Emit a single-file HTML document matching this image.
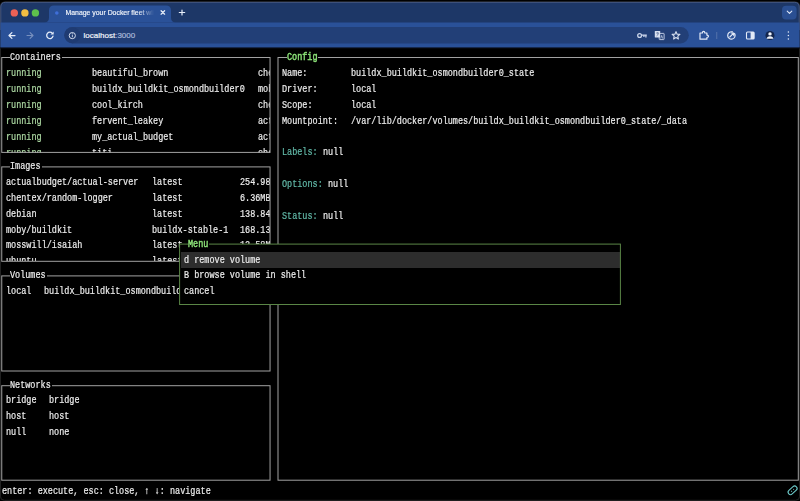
<!DOCTYPE html>
<html><head><meta charset="utf-8">
<style>
html,body{margin:0;padding:0;width:800px;height:501px;overflow:hidden;background:#000;}
body{position:relative;font-family:"Liberation Sans",sans-serif;}
.abs{position:absolute;}
.t{position:absolute;white-space:pre;font-family:"Liberation Mono",monospace;font-size:10.00px;line-height:10px;color:#ededed;-webkit-text-stroke:0.2px currentColor;transform:scaleX(0.8483);transform-origin:0 0;}
.g{color:#aedba4;}
.tg{color:#8ce278;-webkit-text-stroke:0.45px currentColor;}
.cy{color:#62baa9;}
.clip{position:absolute;overflow:hidden;}
</style></head><body>
<svg class="abs" style="left:0;top:0" width="800" height="501">
  <rect x="0.4" y="1.9" width="799.2" height="498.4" rx="4" fill="#000" stroke="#2a2a2a" stroke-width="0.9"/>
  <path d="M0.4 7 Q0.4 1.9 5.5 1.9 H794.5 Q799.6 1.9 799.6 7 V48 H0.4Z" fill="#1d3767"/>
  <path d="M0.8 30 V7 Q0.8 2.3 5.5 2.3 H794.5 Q799.2 2.3 799.2 7 V30" fill="none" stroke="#4b5b82" stroke-width="0.9"/>
  <rect x="0.5" y="22.5" width="799" height="25" fill="#2a5198"/>
  <path d="M44 22.5 Q49 22.5 49 17.5 V10.5 Q49 5.5 54 5.5 H166 Q171 5.5 171 10.5 V17.5 Q171 22.5 176 22.5Z" fill="#2a5198"/>
  <circle cx="14.3" cy="12.9" r="3.7" fill="#ec6156"/>
  <circle cx="24.9" cy="12.9" r="3.7" fill="#f3be42"/>
  <circle cx="35.4" cy="12.9" r="3.7" fill="#5fc04c"/>
  <rect x="782" y="5.7" width="14.6" height="13.8" rx="4" fill="#2a4f92"/>
  <path d="M787.2 11.2 L789.5 13.4 L791.8 11.2" fill="none" stroke="#dfe8f8" stroke-width="1.1" stroke-linecap="round" stroke-linejoin="round"/>
  <rect x="64.2" y="27" width="624.6" height="16.4" rx="8.2" fill="#223f77"/>
  <circle cx="72.4" cy="35.2" r="8" fill="#1f3b72"/>
  <circle cx="72.3" cy="35.6" r="3.1" fill="none" stroke="#e3eaf7" stroke-width="0.9"/>
  <rect x="71.9" y="34.6" width="0.8" height="2.6" fill="#e3eaf7"/>
  <circle cx="72.3" cy="33.5" r="0.45" fill="#e3eaf7"/>
  <!-- back -->
  <path d="M15 35.5 H9.2 M11.9 32.6 L9 35.5 L11.9 38.4" fill="none" stroke="#e6edf9" stroke-width="1.25" stroke-linecap="round" stroke-linejoin="round"/>
  <!-- forward -->
  <path d="M27 35.5 H32.8 M30.1 32.6 L33 35.5 L30.1 38.4" fill="none" stroke="#7890bf" stroke-width="1.1" stroke-linecap="round" stroke-linejoin="round"/>
  <!-- reload -->
  <path d="M52.4 33.4 A3.2 3.2 0 1 0 53 36.2" fill="none" stroke="#e6edf9" stroke-width="1.3" stroke-linecap="round"/>
  <path d="M53.7 31.4 V34.6 H50.5Z" fill="#e6edf9"/>
  <!-- key -->
  <circle cx="639.6" cy="35.5" r="1.9" fill="none" stroke="#c9d4ea" stroke-width="1.3"/>
  <path d="M641.5 35.2 H646.8 M645.9 35.2 V37.4 M643.9 35.2 V37" fill="none" stroke="#c9d4ea" stroke-width="1.3"/>
  <!-- translate -->
  <rect x="659.2" y="33.4" width="4.9" height="6.2" rx="0.5" fill="none" stroke="#c9d4ea" stroke-width="0.9"/>
  <rect x="654.8" y="31" width="5.4" height="6.6" rx="0.5" fill="#d8e0f0"/>
  <path d="M656.2 33 H658.8 M657.5 32.4 V33.4 M656.6 35.9 Q658 35 658.6 33.4" fill="none" stroke="#4a5f8a" stroke-width="0.7"/>
  <path d="M660.7 38.6 L661.7 35.4 L662.7 38.6" fill="none" stroke="#c9d4ea" stroke-width="0.7"/>
  <!-- star -->
  <path d="M676 31.6 L677.1 34.2 L679.9 34.4 L677.8 36.2 L678.4 39 L676 37.5 L673.6 39 L674.2 36.2 L672.1 34.4 L674.9 34.2Z" fill="none" stroke="#d7e0f0" stroke-width="1.1" stroke-linejoin="round"/>
  <!-- extension -->
  <path d="M700 33 H702.4 Q702.4 31.4 703.6 31.4 Q704.8 31.4 704.8 33 H706.9 V35.1 Q708.5 35.1 708.5 36.3 Q708.5 37.5 706.9 37.5 V39.2 H700Z" fill="none" stroke="#e3eaf7" stroke-width="1.2" stroke-linejoin="round"/>
  <rect x="716.4" y="32" width="0.8" height="7" fill="#5f7bb0"/>
  <!-- labs -->
  <path d="M734.6 33.6 A3.7 3.7 0 1 1 732.4 31.9" fill="none" stroke="#e3eaf7" stroke-width="1.2" stroke-linecap="round"/>
  <path d="M729.8 37 L733.6 33.2 M731.2 33 H733.8 V35.6" fill="none" stroke="#e3eaf7" stroke-width="1.1" stroke-linecap="round" stroke-linejoin="round"/>
  <!-- sidebar -->
  <rect x="746.5" y="32" width="7.6" height="7" rx="1" fill="none" stroke="#e3eaf7" stroke-width="1.1"/>
  <rect x="750.6" y="32" width="3.5" height="7" fill="#e3eaf7"/>
  <!-- profile -->
  <circle cx="770" cy="35.5" r="4.5" fill="#14264d"/>
  <circle cx="770" cy="33.9" r="1.7" fill="#f2f5fb"/>
  <path d="M766.6 38.8 Q766.9 36.2 770 36.2 Q773.1 36.2 773.4 38.8Z" fill="#f2f5fb"/>
  <!-- menu dots -->
  <circle cx="788.4" cy="32.1" r="0.75" fill="#e3eaf7"/>
  <circle cx="788.4" cy="35.5" r="0.75" fill="#e3eaf7"/>
  <circle cx="788.4" cy="38.9" r="0.75" fill="#e3eaf7"/>
  <!-- tab contents -->
  <circle cx="56.8" cy="13" r="1.8" fill="#3f6fd8"/>
  <path d="M161.1 10.7 L164.6 14.2 M164.6 10.7 L161.1 14.2" stroke="#e8eef9" stroke-width="1.25" stroke-linecap="round"/>
  <path d="M182 10 V15 M179.3 12.5 H184.7" stroke="#e8eef9" stroke-width="1.2" stroke-linecap="round"/>
  <rect x="0" y="47.5" width="800" height="1" fill="#0a0f18"/>
</svg>
<div class="abs" style="left:65.5px;top:7.6px;width:88px;height:10px;overflow:hidden;white-space:pre;font-family:'Liberation Sans',sans-serif;font-size:6.9px;line-height:10px;color:#f3f6fb;-webkit-text-stroke:0.15px #f3f6fb;-webkit-mask-image:linear-gradient(90deg,#000 82%,transparent 100%)">Manage your Docker fleet with</div>
<div class="abs" style="left:83.6px;top:30.8px;white-space:pre;font-family:'Liberation Sans',sans-serif;font-size:8px;line-height:10px;color:#f3f6fb;-webkit-text-stroke:0.2px currentColor">localhost<span style="color:#a9b9d9">:3000</span></div>
<div class="clip" style="left:2px;top:58px;width:267.5px;height:94.5px"><div class="t g" style="left:4.25px;top:11px">running</div>
<div class="t" style="left:90.25px;top:11px">beautiful_brown</div>
<div class="t" style="left:256.25px;top:11px">chentex/random-logger</div>
<div class="t g" style="left:4.25px;top:27px">running</div>
<div class="t" style="left:90.25px;top:27px">buildx_buildkit_osmondbuilder0</div>
<div class="t" style="left:256.25px;top:27px">moby/buildkit:buildx-stable-1</div>
<div class="t g" style="left:4.25px;top:43px">running</div>
<div class="t" style="left:90.25px;top:43px">cool_kirch</div>
<div class="t" style="left:256.25px;top:43px">chentex/random-logger</div>
<div class="t g" style="left:4.25px;top:59px">running</div>
<div class="t" style="left:90.25px;top:59px">fervent_leakey</div>
<div class="t" style="left:256.25px;top:59px">actualbudget/actual-server</div>
<div class="t g" style="left:4.25px;top:75px">running</div>
<div class="t" style="left:90.25px;top:75px">my_actual_budget</div>
<div class="t" style="left:256.25px;top:75px">actualbudget/actual-server</div>
<div class="t g" style="left:4.25px;top:91px">running</div>
<div class="t" style="left:90.25px;top:91px">titi</div>
<div class="t" style="left:256.25px;top:91px">chentex/random-logger</div>
</div><div class="clip" style="left:2px;top:167px;width:267.5px;height:94px"><div class="t" style="left:4.25px;top:11px">actualbudget/actual-server</div>
<div class="t" style="left:149.75px;top:11px">latest</div>
<div class="t" style="left:238.25px;top:11px">254.98MB</div>
<div class="t" style="left:4.25px;top:27px">chentex/random-logger</div>
<div class="t" style="left:149.75px;top:27px">latest</div>
<div class="t" style="left:238.25px;top:27px">6.36MB</div>
<div class="t" style="left:4.25px;top:43px">debian</div>
<div class="t" style="left:149.75px;top:43px">latest</div>
<div class="t" style="left:238.25px;top:43px">138.84MB</div>
<div class="t" style="left:4.25px;top:59px">moby/buildkit</div>
<div class="t" style="left:149.75px;top:59px">buildx-stable-1</div>
<div class="t" style="left:238.25px;top:59px">168.13MB</div>
<div class="t" style="left:4.25px;top:74px">mosswill/isaiah</div>
<div class="t" style="left:149.75px;top:74px">latest</div>
<div class="t" style="left:238.25px;top:74px">12.58MB</div>
<div class="t" style="left:4.25px;top:90px">ubuntu</div>
<div class="t" style="left:149.75px;top:90px">latest</div>
<div class="t" style="left:238.25px;top:90px">77.86MB</div>
</div><div class="clip" style="left:2px;top:276px;width:267.5px;height:94.5px"><div class="t" style="left:4.25px;top:11px">local</div>
<div class="t" style="left:42.25px;top:11px">buildx_buildkit_osmondbuilder0_state</div>
</div><div class="clip" style="left:2px;top:386px;width:267.5px;height:94px"><div class="t" style="left:4.25px;top:10px">bridge</div>
<div class="t" style="left:47.25px;top:10px">bridge</div>
<div class="t" style="left:4.25px;top:26px">host</div>
<div class="t" style="left:47.25px;top:26px">host</div>
<div class="t" style="left:4.25px;top:42px">null</div>
<div class="t" style="left:47.25px;top:42px">none</div>
</div><div class="t" style="left:282.25px;top:69px">Name:</div>
<div class="t" style="left:351.25px;top:69px">buildx_buildkit_osmondbuilder0_state</div>
<div class="t" style="left:282.25px;top:85px">Driver:</div>
<div class="t" style="left:351.25px;top:85px">local</div>
<div class="t" style="left:282.25px;top:101px">Scope:</div>
<div class="t" style="left:351.25px;top:101px">local</div>
<div class="t" style="left:282.25px;top:117px">Mountpoint:</div>
<div class="t" style="left:351.25px;top:117px">/var/lib/docker/volumes/buildx_buildkit_osmondbuilder0_state/_data</div>
<div class="t cy" style="left:282.25px;top:148px">Labels:</div>
<div class="t" style="left:322.97px;top:148px">null</div>
<div class="t cy" style="left:282.25px;top:180px">Options:</div>
<div class="t" style="left:328.06px;top:180px">null</div>
<div class="t cy" style="left:282.25px;top:212px">Status:</div>
<div class="t" style="left:322.97px;top:212px">null</div>
<div class="t" style="left:1.75px;top:487px">enter: execute, esc: close, ↑ ↓: navigate</div>
<svg class="abs" style="left:0;top:0" width="800" height="501">
  <g fill="none" stroke="#a2a2a2" stroke-width="1">
    <rect x="1.75" y="57.5" width="268.3" height="94.9"/>
    <rect x="1.75" y="166.9" width="268.3" height="94.4"/>
    <rect x="1.75" y="275.9" width="268.3" height="95.1"/>
    <rect x="1.75" y="385.7" width="268.3" height="94.5"/>
    <rect x="278" y="57.5" width="520.3" height="422.7"/>
  </g>
</svg>
<div class="abs" style="left:10.0px;top:52px;width:51.9px;height:10px;background:#000"></div><div class="t" style="left:10.25px;top:53px">Containers</div>
<div class="abs" style="left:10.0px;top:161.2px;width:31.54px;height:10px;background:#000"></div><div class="t" style="left:10.25px;top:162px">Images</div>
<div class="abs" style="left:10.0px;top:270.4px;width:36.629999999999995px;height:10px;background:#000"></div><div class="t" style="left:10.25px;top:271px">Volumes</div>
<div class="abs" style="left:10.0px;top:380.1px;width:41.72px;height:10px;background:#000"></div><div class="t" style="left:10.25px;top:381px">Networks</div>
<div class="abs" style="left:286.5px;top:52.3px;width:31.54px;height:10px;background:#000"></div><div class="t tg" style="left:286.75px;top:53px">Config</div>
<div class="abs" style="left:179.5px;top:244px;width:441px;height:60.5px;background:#000"></div><div class="abs" style="left:180.5px;top:252.3px;width:439px;height:15.7px;background:#2d2d2d"></div><svg class="abs" style="left:0;top:0" width="800" height="501"><rect x="179.6" y="244.1" width="440.8" height="60.4" fill="none" stroke="#5a8646" stroke-width="1"/></svg><div class="abs" style="left:188.1px;top:238.9px;width:21.36px;height:10px;background:#000"></div><div class="t tg" style="left:188.35px;top:240px">Menu</div>
<div class="t" style="left:184.25px;top:256px">d remove volume</div>
<div class="t" style="left:184.25px;top:271px">B browse volume in shell</div>
<div class="t" style="left:184.25px;top:287px">cancel</div>
<svg class="abs" style="left:0;top:0" width="800" height="501">
<g transform="translate(792.6 490.3) rotate(-43)">
<rect x="-5.2" y="-2.4" width="10.4" height="4.8" rx="2.4" fill="none" stroke="#6cc8c8" stroke-width="1.1"/>
<path d="M-1.9 0 H-0.9 M0.9 0 H1.9" stroke="#6cc8c8" stroke-width="1"/>
</g></svg>
</body></html>
